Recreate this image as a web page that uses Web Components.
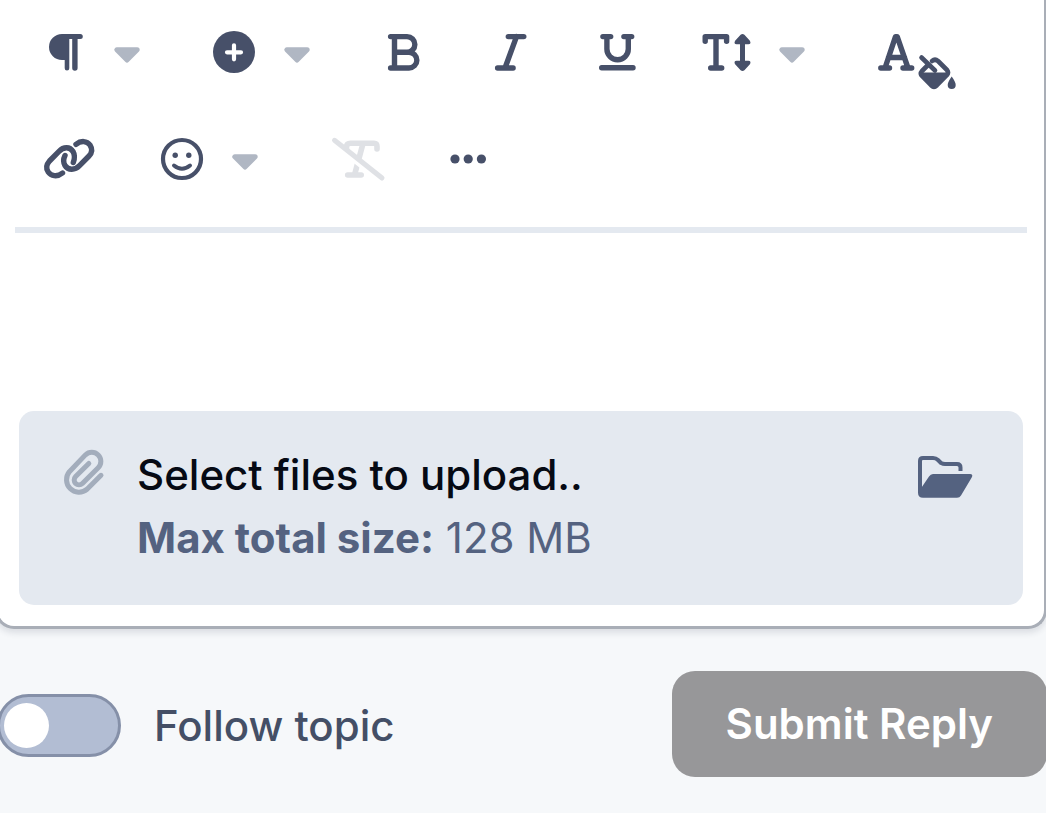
<!DOCTYPE html>
<html lang="en">
<head>
<meta charset="utf-8">
<meta name="viewport" content="width=device-width, initial-scale=1">
<title>Reply to topic</title>
<style>
html { background: #f6f8fa; }
body { margin: 0; overflow-x: hidden; font-family: Inter, "Liberation Sans", sans-serif; font-size: 42px; line-height: 63px; color: #444f66; }
</style>
</head>
<body>
<reply-form></reply-form>

<template id="t-tool">
<style>
:host { display: flex; gap: 22px; color: #475069; }
:host([menu]) { padding-right: 13px; }
:host([disabled]) { color: #dfe1e5; }
button { display: block; margin: 0; padding: 0; border: 0; background: none; color: inherit; cursor: pointer; }
.caret { color: #b0b7c3; }
svg { display: block; overflow: visible; height: 54px; fill: none; stroke: currentColor; stroke-width: 5; stroke-linecap: round; stroke-linejoin: round; }
.f { fill: currentColor; stroke: none; }
</style>
<button type="button" class="main"></button>
</template>

<template id="t-toolbar">
<style>
:host { display: flex; flex-wrap: wrap; gap: 53px; padding: 26px 22px 40px; border-bottom: 6px solid #e4e9f0; }
</style>
<editor-tool icon="paragraph" label="Paragraph format" menu></editor-tool>
<editor-tool icon="plus" label="Insert" menu></editor-tool>
<editor-tool icon="bold" label="Bold"></editor-tool>
<editor-tool icon="italic" label="Italic"></editor-tool>
<editor-tool icon="underline" label="Underline"></editor-tool>
<editor-tool icon="size" label="Font size" menu></editor-tool>
<editor-tool icon="colour" label="Text colour"></editor-tool>
<editor-tool icon="link" label="Link"></editor-tool>
<editor-tool icon="smile" label="Emoji" menu></editor-tool>
<editor-tool icon="clear" label="Remove formatting" disabled></editor-tool>
<editor-tool icon="more" label="More"></editor-tool>
</template>

<template id="t-upload">
<style>
:host { display: block; margin: 0 4px; }
label { display: flex; gap: 29px; padding: 32px 47px 36px 41px; border-radius: 15px; background: #e4e9f0; color: #546280; cursor: pointer; }
input { position: absolute; width: 1px; height: 1px; opacity: 0; }
svg { flex: none; display: block; margin-top: 4px; fill: none; stroke: currentColor; stroke-linecap: round; stroke-linejoin: round; }
.clip { color: #a3adbc; stroke-width: 5; }
.folder { margin-top: 11px; stroke-width: 4; }
.text { flex: 1; min-width: 0; }
.title { display: block; color: #060a14; font-weight: 500; }
.note { display: block; }
b { font-weight: 700; }
</style>
<label for="files">
<svg class="clip" width="48" height="52" viewBox="0 0 48 52" aria-hidden="true"><path d="M41 28.3 27 42.3A12.5 12.5 0 0 1 9.4 24.7L25.4 7.9A9 9 0 0 1 38.2 20.7L22.4 36.4A4.8 4.8 0 0 1 15.6 29.6L28.8 16.4"/></svg>
<span class="text"><span class="title"><slot name="title"></slot></span><span class="note"><b><slot name="limit"></slot></b> <slot name="size"></slot></span></span>
<svg class="folder" width="60" height="48" viewBox="0 0 60 48" aria-hidden="true"><path d="M4 39V7q0-3 3-3h10q3 0 5 2l3 3q2 1 4 1h12q3.500 0 3.500 3.500V17" stroke-linecap="butt"/><path d="M17 20H54q3.500 0 1.700 3.500L45 41.500q-1.300 2.200-4 2.200H7q-5 0-5-5L13 22.500q1.500-2.500 4-2.500Z" fill="currentColor" stroke="none"/></svg>
</label>
<input id="files" type="file" multiple>
</template>

<template id="t-card">
<style>
:host { display: block; box-sizing: border-box; margin: 0 -1px 0 -5px; padding: 0 17px 21px; border: 3px solid #a9aeb7; border-top: 0; border-radius: 0 0 19px 19px; background: #fff; box-shadow: 0 4px 6px #1e28401f; }
textarea { display: block; box-sizing: border-box; width: 100%; height: 178px; padding: 24px; border: 0; outline: 0; resize: none; background: none; font: inherit; color: inherit; }
</style>
<editor-toolbar role="toolbar" aria-label="Formatting"></editor-toolbar>
<textarea aria-label="Reply"></textarea>
<file-upload><span slot="title">Select files to upload..</span><span slot="limit">Max total size:</span><span slot="size">128 MB</span></file-upload>
</template>

<template id="t-toggle">
<style>
:host { display: block; padding-top: 2px; }
label { display: flex; align-items: center; gap: 33px; font-weight: 500; color: #444f66; }
input { appearance: none; display: flex; align-items: center; box-sizing: border-box; width: 124px; height: 63px; margin: 0; padding: 0 4px; border: 3px solid #8590a8; border-radius: 32px; background: #b2bdd3; }
input::before { content: ""; width: 45px; height: 45px; border-radius: 50%; background: #fff; }
input:checked { justify-content: flex-end; }
</style>
<label><input type="checkbox" role="switch"><slot></slot></label>
</template>

<template id="t-submit">
<style>
:host { display: block; }
button { display: block; margin: 0; padding: 21px 54px 22px; border: 0; border-radius: 23px; background: #979799; color: #fff; font: inherit; font-weight: 600; }
</style>
<button type="submit"><slot></slot></button>
</template>

<template id="t-form">
<style>
:host { display: block; }
footer { display: flex; flex-wrap: wrap; align-items: center; justify-content: space-between; margin: 42px -1px 36px -3px; }
</style>
<editor-card></editor-card>
<footer><follow-toggle>Follow topic</follow-toggle><submit-button>Submit Reply</submit-button></footer>
</template>

<script>
function define(name, templateId, setup) {
  customElements.define(name, class extends HTMLElement {
    constructor() {
      super();
      this.attachShadow({ mode: "open" }).append(document.getElementById(templateId).content.cloneNode(true));
    }
    connectedCallback() { if (setup && !this.ready) { this.ready = true; setup(this, this.shadowRoot); } }
  });
}

// Each icon: [width, markup]; all are 54 units high.
const icons = {
  paragraph: [54, '<path class="f" d="M25 8a13 13 0 0 0 0 26h2.700v8.200a2.300 2.300 0 0 0 4.600 0V13h2.900v29a2.700 2.700 0 0 0 5.400 0V13h2.700a2.500 2.500 0 0 0 0-5Z"/>'],
  plus: [54, '<circle class="f" cx="27" cy="26" r="21"/><path d="M20 26.300h14M27 19.300v14" stroke="#fff" stroke-width="4.200"/>'],
  bold: [54, '<path d="M13.600 10.600H30a7.800 7.800 0 0 1 0 15.700H17.500M30 26.300h2a7.800 7.800 0 0 1 0 15.700H13.600M17.500 10.600V42" stroke-width="5.400"/>'],
  italic: [54, '<path d="M24.300 10.600h15.500M13.600 42h15.500M32.500 10.600 21 42" stroke-width="5.400"/>'],
  underline: [54, '<path d="M11.900 10.600h7.800M32.900 10.600h7.800M15.900 10.600V23a10.700 10.700 0 0 0 21.400 0V10.600M10.700 41.800H42" stroke-width="5.400"/>'],
  size: [58, '<path d="M7.200 15.300v-4.700h21.400v4.700M18 10.600V42M12.700 42h11" stroke-width="5.400"/><path d="M44.500 16v21"/><path class="f" d="M42.600 8.700q1.900-1.600 3.800 0l5.500 6q1.700 3.300-1.500 3.600H38.600q-3.200-.3-1.500-3.600ZM42.600 44.300q1.900 1.600 3.800 0l5.500-6q1.700-3.300-1.500-3.600H38.600q-3.200.3-1.500 3.600Z"/>'],
  colour: [90, '<path d="M13 42 23.500 10.600h1.700L36 42M16.500 31.500h16M8.800 42h8.700M31 42h8.700" stroke-width="5.400"/><path d="M55.500 39.500 50 45q-2.200 2.500 0 5l9.300 9.500q2.700 2.500 5.400 0L75 49q2-2.500 0-5l-9-9q-3-2.500-6 0" stroke-width="4.600"/><path d="M49.500 31.500 63 44.500" stroke-width="4.600"/><path class="f" d="M47 46.500h31L64.700 61.500q-2.700 2-5.400 0ZM79.700 50.500q-4 5.500-4 8.500a4 4 0 0 0 8 0q0-3-4-8.500Z"/>'],
  link: [64, '<path d="M25.500 40C20 44.500 14 43 11.200 39 8.800 35.500 9 32 12.500 28L22 18.300C26.500 13.500 33 13.500 36 18.500 38 22 38 25 36.300 29.500M39 11.300C44 7.300 50 7.800 53 12 55.500 16 55 20 52 23L42.500 32.700C38 37.500 31 37.500 28 32.500 26 29 26 26.500 28 22.500" stroke-width="5.400"/>'],
  smile: [55, '<circle cx="28" cy="26" r="19" stroke-width="4.200"/><circle class="f" cx="21.200" cy="22.300" r="2.700"/><circle class="f" cx="34.800" cy="22.300" r="2.700"/><path d="M20 32.500q8 6.500 16 0" stroke-width="4"/>'],
  clear: [63, '<path d="M21.500 16.500v-2.500q0-3.800 4-3.800H49q3 0 3 3.300v2.500M38 10.500 29.500 42M22.700 42h13.500" stroke-width="5.600"/><path d="M9.500 11.800 53 46.500" stroke="#fff" stroke-width="4.600" stroke-linecap="butt"/><path d="M9.500 7.300 57 45"/>'],
  more: [54, '<g class="f"><circle cx="14" cy="26" r="4.600"/><circle cx="27.200" cy="26" r="4.600"/><circle cx="40.400" cy="26" r="4.600"/></g>']
};
const drawIcon = (width, markup) => `<svg width="${width}" height="54" viewBox="0 0 ${width} 54" aria-hidden="true">${markup}</svg>`;

define("editor-tool", "t-tool", (host, root) => {
  const main = root.querySelector(".main");
  const label = host.getAttribute("label");
  main.innerHTML = drawIcon(...icons[host.getAttribute("icon")]);
  main.setAttribute("aria-label", label);
  main.disabled = host.hasAttribute("disabled");
  if (host.hasAttribute("menu")) {
    const caret = document.createElement("button");
    caret.type = "button";
    caret.className = "caret";
    caret.setAttribute("aria-label", label + " options");
    caret.innerHTML = drawIcon(28, '<path d="M3.800 23.800H24.200L14 34Z" fill="currentColor"/>');
    root.append(caret);
  }
});
define("editor-toolbar", "t-toolbar");
define("file-upload", "t-upload");
define("editor-card", "t-card");
define("follow-toggle", "t-toggle");
define("submit-button", "t-submit");
define("reply-form", "t-form");
</script>
</body>
</html>
